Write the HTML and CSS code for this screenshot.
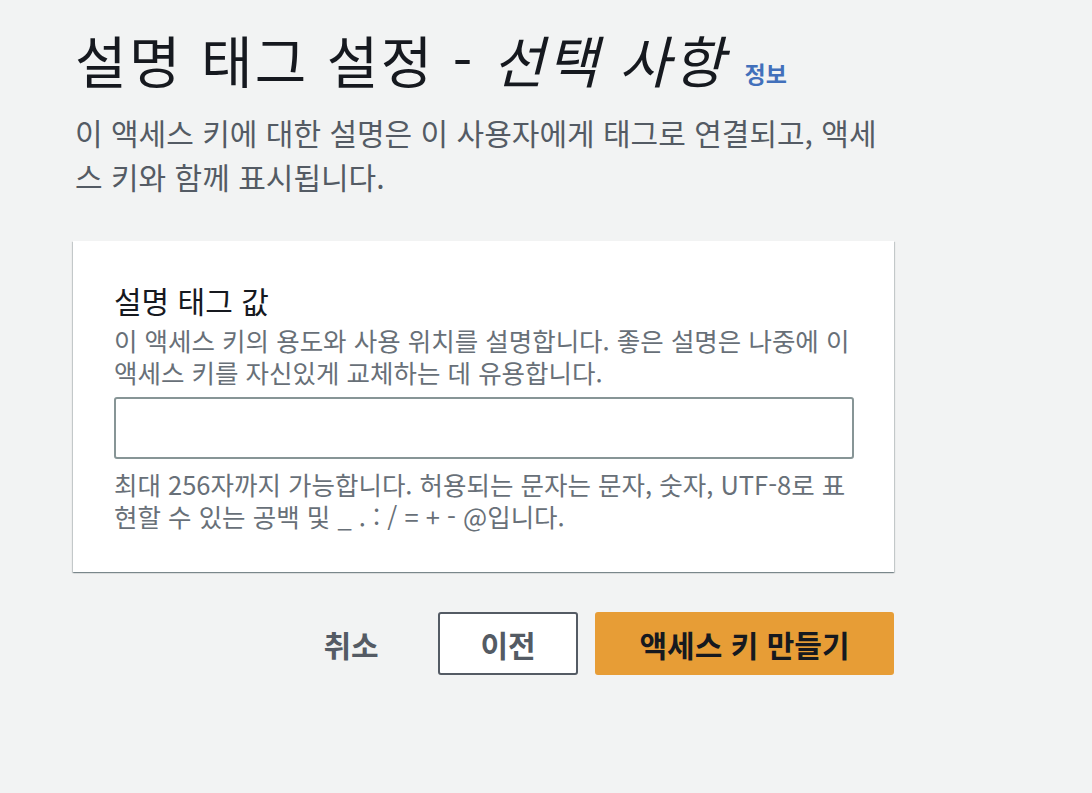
FILE: index.html
```html
<!DOCTYPE html>
<html lang="ko">
<head>
<meta charset="utf-8">
<title>설명 태그 설정</title>
<link rel="stylesheet" href="styles.css">
</head>
<body>
<main class="page">
  <h1 class="title">설명 태그 설정 - <em class="title-opt">선택 사항</em> <a class="info" href="#">정보</a></h1>
  <p class="lead">이 액세스 키에 대한 설명은 이 사용자에게 태그로 연결되고, 액세스 키와 함께 표시됩니다.</p>

  <section class="card">
    <label class="field-label" for="desc">설명 태그 값</label>
    <p class="field-desc">이 액세스 키의 용도와 사용 위치를 설명합니다. 좋은 설명은 나중에 이 액세스 키를 자신있게 교체하는 데 유용합니다.</p>
    <input class="field-input" id="desc" type="text">
    <p class="field-help">최대 256자까지 가능합니다. 허용되는 문자는 문자, 숫자, UTF-8로 표현할 수 있는 공백 및 _ . : / = + - @입니다.</p>
  </section>

  <div class="actions">
    <button class="btn btn-link" type="button">취소</button>
    <button class="btn btn-normal" type="button">이전</button>
    <button class="btn btn-primary" type="button">액세스 키 만들기</button>
  </div>
</main>
</body>
</html>
```

FILE: styles.css
```css
html, body {
  margin: 0;
  padding: 0;
  background: #f2f3f3;
}

body {
  font-family: "Noto Sans CJK KR", "Noto Sans", sans-serif;
  color: #16191f;
}

.page {
  padding: 29px 0 0 75px;
  display: flex;
  flex-direction: column;
  align-items: flex-start;
}

.title {
  margin: 0;
  height: 60px;
  font-size: 56px;
  line-height: 60px;
  font-weight: 400;
  letter-spacing: 2.4px;
  color: #16191f;
  white-space: nowrap;
}

.title-opt {
  font-style: italic;
}

.info {
  font-size: 23px;
  line-height: 1;
  font-weight: 700;
  letter-spacing: 0;
  color: #4270bb;
  text-decoration: none;
}

.lead {
  margin: 21px 0 0;
  width: 805px;
  font-size: 30px;
  line-height: 44px;
  color: #545b64;
}

.card {
  margin: 43px 0 0 -2px;
  width: 821px;
  box-sizing: border-box;
  padding: 41px 40px 40px 41px;
  background: #ffffff;
  box-shadow: 0 1px 1px 0 rgba(0, 28, 36, 0.3), 1px 1px 1px 0 rgba(0, 28, 36, 0.15), -1px 1px 1px 0 rgba(0, 28, 36, 0.15);
  display: flex;
  flex-direction: column;
}

.field-label {
  font-size: 30px;
  line-height: 36px;
  color: #16191f;
}

.field-desc,
.field-help {
  margin: 6px 0 0;
  font-size: 25.5px;
  line-height: 32px;
  color: #687078;
}

.field-input {
  margin-top: 9px;
  height: 62px;
  box-sizing: border-box;
  border: 2px solid #879596;
  border-radius: 3px;
  background: #fff;
  font: inherit;
  font-size: 24px;
  padding: 0 16px;
}

.field-help {
  margin-top: 9px;
}

.actions {
  margin: 40px 0 0 -2px;
  width: 821px;
  display: flex;
  justify-content: flex-end;
  gap: 17px;
}

.btn {
  height: 63px;
  box-sizing: border-box;
  border-radius: 3px;
  font-family: inherit;
  font-size: 30px;
  font-weight: 700;
  padding: 0 10px;
  cursor: pointer;
}

.btn-link {
  width: 140px;
  border: 2px solid transparent;
  background: transparent;
  color: #545b64;
}

.btn-normal {
  width: 140px;
  border: 2px solid #545b64;
  background: #ffffff;
  color: #545b64;
}

.btn-primary {
  width: 299px;
  border: 2px solid #e79d36;
  background: #e79d36;
  color: #16191f;
}
```
